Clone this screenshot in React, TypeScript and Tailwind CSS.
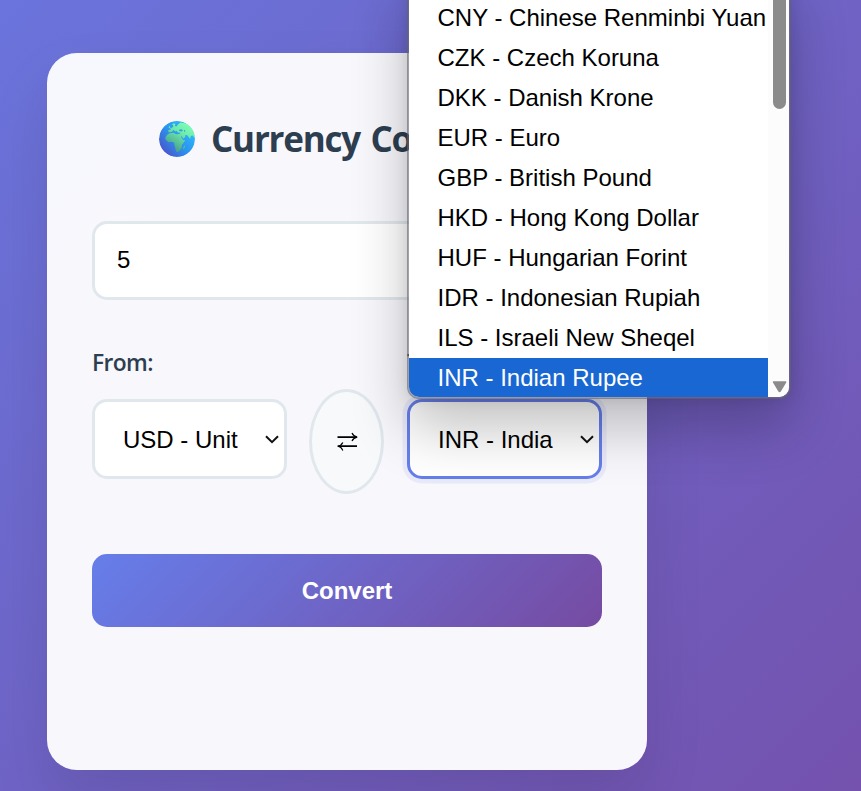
const options = [
  "CNY - Chinese Renminbi Yuan",
  "CZK - Czech Koruna",
  "DKK - Danish Krone",
  "EUR - Euro",
  "GBP - British Pound",
  "HKD - Hong Kong Dollar",
  "HUF - Hungarian Forint",
  "IDR - Indonesian Rupiah",
  "ILS - Israeli New Sheqel",
  "INR - Indian Rupee",
];

function Globe() {
  return (
    <svg className="block h-9 w-9 shrink-0" viewBox="0 0 36 36">
      <defs>
        <linearGradient id="sea" x1="0.85" y1="0.2" x2="0.1" y2="0.85">
          <stop offset="0" stopColor="#2fb8fb" />
          <stop offset="0.5" stopColor="#2b92ee" />
          <stop offset="1" stopColor="#4a55cc" />
        </linearGradient>
        <linearGradient id="land" x1="0.85" y1="0.1" x2="0.35" y2="0.9">
          <stop offset="0" stopColor="#7cffb4" />
          <stop offset="0.4" stopColor="#6fe9ac" />
          <stop offset="1" stopColor="#4aa68f" />
        </linearGradient>
        <clipPath id="disc">
          <circle cx="18" cy="18" r="18" />
        </clipPath>
      </defs>
      <g clipPath="url(#disc)">
        <circle cx="18" cy="18" r="18" fill="url(#sea)" />
        <path
          fill="url(#land)"
          d="M13 3.2 L15 2.2 L16.5 3 L15.8 5 L17.5 5.6 L19 3.4 L21.5 1.5 L30 3 L36 11 L35.5 17 L34.2 15.2 L33.2 14.2 L31.6 15.6 L31.2 18 L29.6 16 L28.2 14.2 L26.2 14 L26.3 16 L24.3 17.8 L22.6 15 L22 16 L24 19 L26.3 19.2 L24.6 21.8 L22.9 23.8 L22.8 26.3 L21 29.2 L19 31 L17.2 30.6 L16.3 27.2 L15.5 24 L15 21.5 L12.5 20.7 L9.3 21.2 L6.6 18.6 L6.3 16.4 L8.2 13.7 L10.5 12.2 L14.8 11.7 L17 13.2 L20.4 13 L21.5 11.8 L18.7 11.4 L17.6 9.7 L16.2 10.5 L14.5 9.1 L12.8 11 L9.5 11.2 L9.3 9 L12 8.6 L11 7.1 L13.2 6.8 L14.5 5 Z M9.7 6 L10.5 4.8 L11.4 6.6 L10 7.6 Z M25.1 24.4 L26.1 25 L25.1 28 L23.9 28.3 Z"
        />
        <path fill="#2c9fdf" d="M20 8.8 L22.3 8.2 L24 9.5 L22.4 10.4 L20.5 10.1 Z M25 9 L26.2 9.3 L26 11 L25.2 10.5 Z" />
      </g>
    </svg>
  );
}

function Chevron() {
  return (
    <svg className="absolute top-1/2 right-[4px] h-[14px] w-[16px] -translate-y-1/2" viewBox="0 0 16 14" fill="none">
      <path d="M2 4.2 L8 10.2 L14 4.2" stroke="#111" strokeWidth="2" />
    </svg>
  );
}

function CurrencySelect({ label, value, focused }: { label: string; value: string; focused?: boolean }) {
  return (
    <div className="flex w-[195px] flex-col">
      <span className="mb-5 h-8 font-['Open_Sans','Noto_Sans',sans-serif] text-[22.8px] leading-8 font-semibold tracking-[-0.6px] text-[#2c3e50]">
        {label}
      </span>
      <div
        className={
          focused
            ? "relative flex h-20 shrink-0 items-center rounded-[15px] border-3 border-[#667eea] bg-white pl-7 shadow-[0_0_0_4.5px_rgba(102,126,234,0.1)]"
            : "relative flex h-20 shrink-0 items-center rounded-[15px] border-3 border-[#e1e8ed] bg-white pl-7"
        }
      >
        <span className="block w-[116px] overflow-hidden pt-[2px] whitespace-nowrap">{value}</span>
        <Chevron />
      </div>
    </div>
  );
}

function Dropdown() {
  return (
    <div className="absolute top-[-30px] left-[407px] flex h-[429px] w-[384px] overflow-hidden rounded-b-[12px] border-2 border-[#66646e]/60 bg-white bg-clip-padding shadow-[0_30px_56px_rgba(0,0,0,0.24),0_0_14px_rgba(0,0,0,0.1)]">
      <ul className="flex w-[359px] shrink-0 flex-col pt-[26px]">
        {options.map((o) => (
          <li
            key={o}
            className={
              o.startsWith("INR")
                ? "h-10 shrink-0 bg-[#1967d2] pl-[28.5px] leading-10 whitespace-nowrap text-white"
                : "h-10 shrink-0 pl-[28.5px] leading-10 whitespace-nowrap"
            }
          >
            {o}
          </li>
        ))}
      </ul>
      <div className="flex flex-1 flex-col items-center justify-between bg-[#fcfcfc] pb-1 pl-[2px]">
        <div className="h-[137px] w-[13px] rounded-full bg-[#8b8b8b]" />
        <svg className="h-3 w-4" viewBox="0 0 16 12">
          <path d="M1.6 1 H13.6 L8.2 10 Q7.6 10.8 7 10 Z" fill="#8b8b8b" stroke="#8b8b8b" strokeWidth="1.5" strokeLinejoin="round" />
        </svg>
      </div>
    </div>
  );
}

export default function App() {
  return (
    <div className="relative h-[791px] w-[861px] overflow-hidden bg-[linear-gradient(135deg,#6a74dc_0%,#7452ae_100%)] pt-[53px] pl-[47px] font-['Liberation_Sans',Arial,sans-serif] text-[24px] text-black">
      <main className="flex h-[717px] w-[600px] flex-col rounded-[30px] bg-[linear-gradient(135deg,#f6f8fe_0%,#f8f7fc_25%,#f8f7fc_100%)] px-[45px] pt-[60px] shadow-[0_30px_60px_rgba(0,0,0,0.1)]">
        <h1 className="flex h-[52px] items-center pl-[67px] font-['Open_Sans','Noto_Sans',sans-serif] text-[35px] leading-[52px] font-bold tracking-[-1.2px] [word-spacing:2.5px] whitespace-nowrap text-[#2c3e50]">
          <Globe />
          <span className="ml-4">Currency Converter</span>
        </h1>
        <div className="mt-14 flex h-[79px] shrink-0 items-center rounded-[15px] border-3 border-[#e1e8ed] bg-white pb-[2px] pl-[22px]">5</div>
        <div className="mt-[47px] flex h-[147px] justify-between">
          <CurrencySelect label="From:" value="USD - Unit" />
          <div className="mt-[42px] mr-[2px] flex h-[105px] w-[75px] items-center justify-center rounded-[50%] border-3 border-[#e1e8ed] bg-[#f8f9fa] pl-[1px]">
            <svg className="h-5 w-[22px]" viewBox="0 0 22 20" fill="none" stroke="#000" strokeWidth="1.8">
              <path d="M1.5 5.2 H20.5 M21 14.2 H2.5" />
              <path d="M16 0.9 Q17.5 4.5 21.2 5.2 Q17.5 5.9 16 9 M6.8 10.4 Q5.4 13.5 1.6 14.2 Q5.4 14.9 6.8 18.5" strokeWidth="1.2" />
            </svg>
          </div>
          <CurrencySelect label="To:" value="INR - India" focused />
        </div>
        <button className="mt-[60px] h-[73px] shrink-0 rounded-[15px] bg-[linear-gradient(135deg,#667eea_0%,#764ba2_100%)] font-bold text-white">
          Convert
        </button>
      </main>
      <Dropdown />
    </div>
  );
}
